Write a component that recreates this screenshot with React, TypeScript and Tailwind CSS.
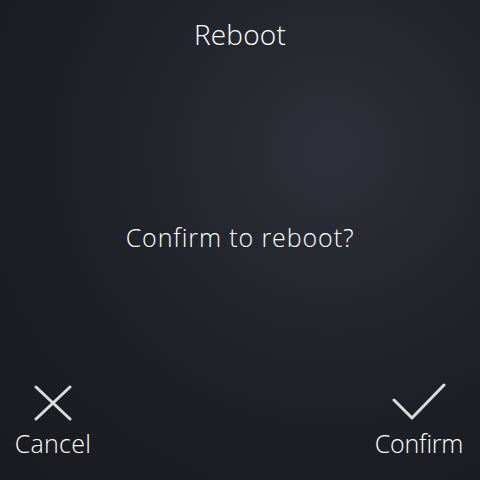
export default function App() {
  return (
    <div
      className="relative flex h-[480px] w-[480px] flex-col overflow-hidden bg-[radial-gradient(circle_at_330px_150px,#2d3038_0%,#24272e_30%,#1c1f25_60%,#191b20_100%)] text-white"
      style={{ fontFamily: '"Open Sans", "Noto Sans", sans-serif' }}
    >
      <div className="flex h-[70px] items-center justify-center pb-[2px] text-[28px] font-light leading-none tracking-[0.2px]">
        Reboot
      </div>
      <div className="flex flex-1 items-start justify-center pt-[155px] text-[25px] font-light leading-none tracking-[0.9px]">
        Confirm to reboot?
      </div>
      <div className="flex items-end justify-between pb-[24px] pl-[14px] pr-[16px]">
        <button className="flex w-[78px] flex-col items-center gap-[10px]">
          <svg width="40" height="36" viewBox="0 0 40 36" fill="none">
            <path d="M3 2L37 34M37 2L3 34" stroke="#dcdcdc" strokeWidth="3" strokeLinecap="round" />
          </svg>
          <span className="text-[25px] font-light leading-none tracking-[0.3px]">Cancel</span>
        </button>
        <button className="flex w-[90px] flex-col items-center gap-[10px]">
          <svg width="54" height="38" viewBox="0 0 54 38" fill="none">
            <path d="M2 17L20 35L52 2" stroke="#dcdcdc" strokeWidth="3" strokeLinecap="round" strokeLinejoin="round" />
          </svg>
          <span className="text-[25px] font-light leading-none tracking-[-0.2px]">Confirm</span>
        </button>
      </div>
    </div>
  );
}
